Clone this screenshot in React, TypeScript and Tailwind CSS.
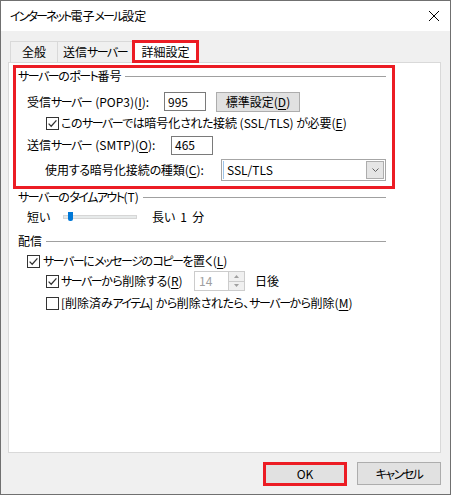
import React from "react";

const KANA_RE = /([\u30a0-\u30ff]+|[\u3040-\u309f]+)/;

function k(s: string, title = false): React.ReactNode[] {
  return s.split(KANA_RE).map((part, i) => {
    if (!part) return null;
    if (/^[\u30a0-\u30ff]+$/.test(part))
      return (
        <span key={i} className={title ? "tracking-[-1.9px]" : "tracking-[-1.5px]"}>
          {part}
        </span>
      );
    if (/^[\u3040-\u309f]+$/.test(part))
      return (
        <span key={i} className={title ? "tracking-[-1px]" : "tracking-[-0.5px]"}>
          {part}
        </span>
      );
    return <React.Fragment key={i}>{part}</React.Fragment>;
  });
}

const Check = ({ checked }: { checked: boolean }) => (
  <svg width="13" height="13" viewBox="0 0 13 13" className="shrink-0">
    <rect x="0.5" y="0.5" width="12" height="12" fill="#fff" stroke="#333" />
    {checked && (
      <path d="M2.6 6.6 L5.2 9.2 L10.4 3.4" fill="none" stroke="#333" strokeWidth="1.3" />
    )}
  </svg>
);

const GroupLabel = ({ children }: { children: React.ReactNode }) => (
  <div className="flex items-center h-[16px]">
    <span className="whitespace-nowrap">{children}</span>
    <div className="flex-1 h-px bg-[#a0a0a0] ml-[4px]" />
  </div>
);

const U = ({ children }: { children: React.ReactNode }) => (
  <span className="underline underline-offset-[2px] decoration-1">{children}</span>
);

export default function App() {
  return (
    <div className="w-[451px] h-[495px] border border-[#707070] flex flex-col bg-[#f0f0f0] text-[12px] leading-[16px] text-black font-['Noto_Sans_CJK_JP',sans-serif] [font-feature-settings:'palt'] overflow-hidden">
      <div className="h-[30px] bg-white flex items-center justify-between pl-[9px] pr-[11px] shrink-0">
        <span className="whitespace-nowrap">{k("インターネット電子メール設定", true)}</span>
        <svg width="10" height="10" viewBox="0 0 10 10">
          <path d="M0 0 L10 10 M10 0 L0 10" stroke="#000" strokeWidth="1" />
        </svg>
      </div>
      <div className="flex-1 flex flex-col pl-[7px] pr-[9px]">
        <div className="flex items-end h-[31px] pl-[2px]">
          <div className="w-[48px] h-[21px] border border-b-0 border-[#d9d9d9] flex items-center justify-center">全般</div>
          <div className="w-[75px] h-[21px] border border-b-0 border-l-0 border-[#d9d9d9] flex items-center justify-center whitespace-nowrap">{k("送信サーバー")}</div>
          <div className="w-[67px] h-[23px] -mb-[1px] -ml-[1px] border-[3px] border-[#ec1c24] bg-white flex items-center justify-center relative z-10">詳細設定</div>
        </div>
        <div className="h-[391px] border border-[#d9d9d9] bg-white pt-[2px] pl-[9px]">
          <div className="w-[368px] flex flex-col">
            <div className="-ml-[5px] -mr-[9px] border-[3px] border-[#ec1c24] pl-[2px] pr-[6px] pb-[5px]">
              <GroupLabel>{k("サーバーのポート番号")}</GroupLabel>
              <div className="flex items-center h-[21px] mt-[7px] pl-[9px]">
                <span className="w-[137px] whitespace-nowrap">{k("受信サーバー")}<span className="ml-[4px]">(POP3)(<U>I</U>):</span></span>
                <div className="w-[42px] h-[19px] border border-[#7a7a7a] flex items-center pl-[3px]">995</div>
                <div className="ml-[10px] w-[84px] h-[20px] border border-[#adadad] bg-[#e1e1e1] flex items-center justify-center">標準設定(<U>D</U>)</div>
              </div>
              <div className="flex items-center h-[16px] mt-[3px] pl-[28px] gap-[2px]">
                <Check checked />
                <span className="whitespace-nowrap">{k("このサーバーでは暗号化された接続 (SSL/TLS) が必要(")}<U>E</U>)</span>
              </div>
              <div className="flex items-center h-[20px] mt-[4px] pl-[9px]">
                <span className="w-[144px] whitespace-nowrap">{k("送信サーバー")}<span className="ml-[4px]">(SMTP)(<U>O</U>):</span></span>
                <div className="w-[42px] h-[19px] border border-[#7a7a7a] flex items-center pl-[3px]">465</div>
              </div>
              <div className="flex items-center h-[23px] mt-[3px] pl-[27px]">
                <span className="w-[177px] whitespace-nowrap">{k("使用する暗号化接続の種類(")}<U>C</U>):</span>
                <div className="w-[166px] h-[22px] border border-[#a6a6a6] flex items-center relative">
                  <div className="w-px h-[18px] bg-[#9cc4ea] ml-px" />
                  <span className="ml-[3px] flex-1">SSL/TLS</span>
                  <div className="w-[18px] h-[18px] mr-px border border-[#adadad] bg-[#e5e5e5] flex items-center justify-center">
                    <svg width="7" height="4" viewBox="0 0 7 4">
                      <path d="M0.5 0.5 L3.5 3.5 L6.5 0.5" fill="none" stroke="#606060" strokeWidth="1" />
                    </svg>
                  </div>
                </div>
              </div>
            </div>
            <GroupLabel>{k("サーバーのタイムアウト(T)")}</GroupLabel>
            <div className="flex items-center h-[20px] mt-[2px] pl-[9px]">
              <span className="w-[36px]">{k("短い")}</span>
              <div className="w-[74px] h-[4px] bg-[#e7eaea] border border-[#d6d6d6] relative">
                <div className="absolute left-[4px] top-[-4px] w-[5px] h-[9px] bg-[#0078d7] rounded-b-[2px]" />
              </div>
              <span className="ml-[15px] whitespace-nowrap">{k("長い")}&nbsp;&nbsp;1&nbsp;&nbsp;分</span>
            </div>
            <div className="mt-[6px]">
              <GroupLabel>配信</GroupLabel>
            </div>
            <div className="flex items-center h-[16px] mt-[4px] pl-[9px] gap-[3px]">
              <Check checked />
              <span className="whitespace-nowrap">{k("サーバーにメッセージのコピーを置く(")}<U>L</U>)</span>
            </div>
            <div className="flex items-center h-[20px] mt-[2px] pl-[28px]">
              <Check checked />
              <span className="w-[135px] pl-[2px] whitespace-nowrap">{k("サーバーから削除する(")}<U>R</U>)</span>
              <div className="w-[51px] h-[20px] border border-[#cccccc] flex items-center">
                <span className="flex-1 pl-[4px] text-[#a0a0a0]">14</span>
                <div className="w-[16px] h-[18px] flex flex-col border-l border-[#cccccc]">
                  <div className="flex-1 bg-[#f0f0f0] border-b border-[#cccccc] flex items-center justify-center">
                    <svg width="5" height="3" viewBox="0 0 5 3"><path d="M0 3 L2.5 0 L5 3 Z" fill="#a0a0a0" /></svg>
                  </div>
                  <div className="flex-1 bg-[#f0f0f0] flex items-center justify-center">
                    <svg width="5" height="3" viewBox="0 0 5 3"><path d="M0 0 L2.5 3 L5 0 Z" fill="#a0a0a0" /></svg>
                  </div>
                </div>
              </div>
              <span className="ml-[10px]">日後</span>
            </div>
            <div className="flex items-center h-[16px] mt-[4px] pl-[28px] gap-[2px]">
              <Check checked={false} />
              <span className="whitespace-nowrap">{k("[削除済みアイテム] から削除されたら、サーバーから削除(")}<U>M</U>)</span>
            </div>
          </div>
        </div>
        <div className="flex justify-end items-start mt-[9px] gap-[10px]">
          <div className="w-[84px] h-[24px] border-[3px] border-[#ec1c24] bg-[#e1e1e1] flex items-center justify-center">OK</div>
          <div className="w-[84px] h-[23px] border border-[#adadad] bg-[#e1e1e1] flex items-center justify-center whitespace-nowrap">{k("キャンセル")}</div>
        </div>
      </div>
    </div>
  );
}
